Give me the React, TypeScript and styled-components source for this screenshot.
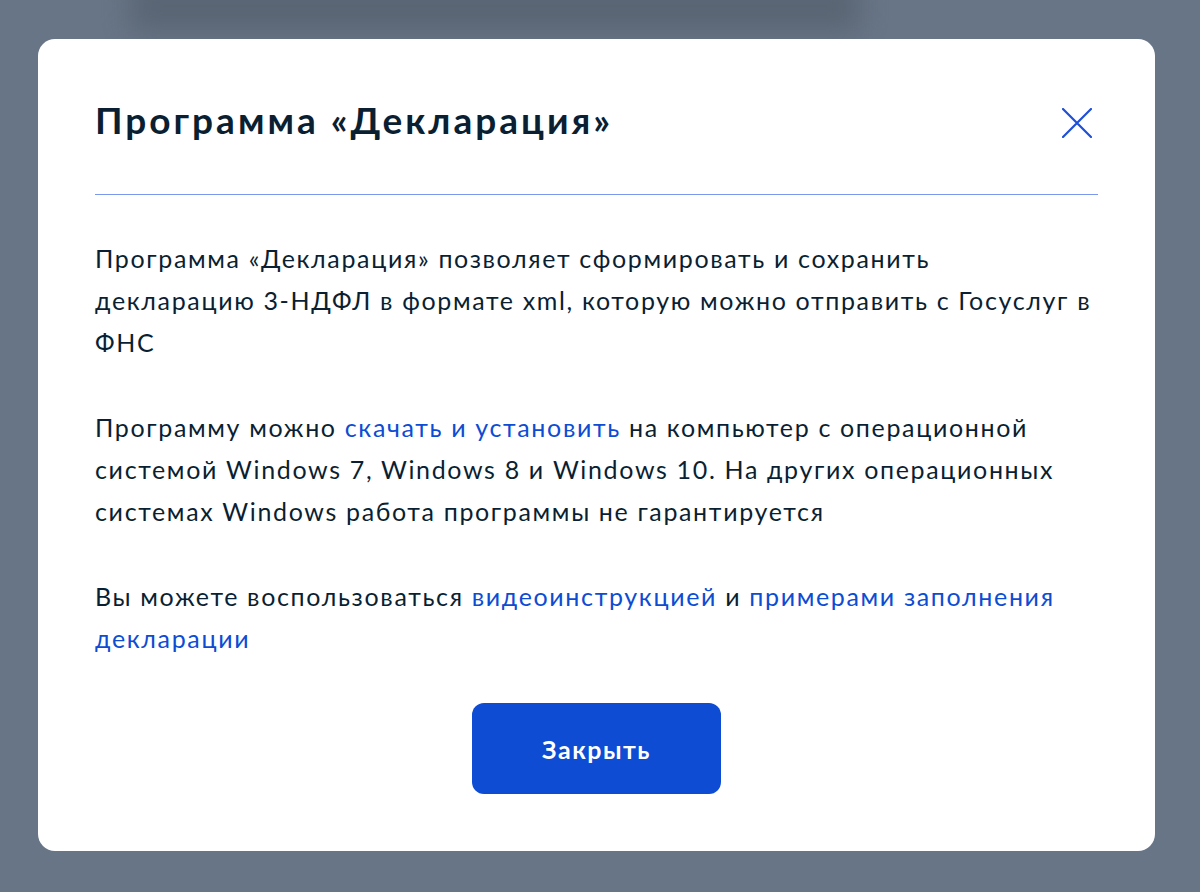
import styled, { createGlobalStyle } from 'styled-components';

const GlobalStyle = createGlobalStyle`
  html, body {
    margin: 0;
    padding: 0;
  }

  body {
    font-family: Lato, 'Noto Sans', sans-serif;
    color: #0b1f33;
  }
`;

const Backdrop = styled.div`
  position: relative;
  width: 1200px;
  height: 892px;
  overflow: hidden;
  background: #687586;
  padding: 39px 0 0 38px;
  box-sizing: border-box;
`;

const BlurredHeader = styled.div`
  position: absolute;
  top: -20px;
  left: 130px;
  width: 730px;
  height: 52px;
  background: #56616f;
  filter: blur(14px);
  opacity: 0.8;
`;

const Modal = styled.div`
  position: relative;
  width: 1117px;
  height: 812px;
  box-sizing: border-box;
  padding: 59px 57px 57px 57px;
  background: #ffffff;
  border-radius: 17px;
  display: flex;
  flex-direction: column;
`;

const Header = styled.div`
  display: flex;
  justify-content: space-between;
  align-items: flex-start;
  padding-bottom: 52px;
  border-bottom: 1.5px solid #7b98ee;
`;

const Title = styled.h1`
  margin: 0;
  font-size: 37px;
  line-height: 44px;
  font-weight: 700;
  letter-spacing: 3px;
  color: #0b1f33;
`;

const CloseButton = styled.button`
  margin: 10px 6px 0 0;
  padding: 0;
  width: 30px;
  height: 30px;
  border: none;
  background: none;
  cursor: pointer;
  display: flex;
`;

const Body = styled.div`
  padding-top: 42px;
  margin-right: -8px;
  display: flex;
  flex-direction: column;
  gap: 43px;
`;

const Paragraph = styled.p`
  margin: 0;
  font-size: 25px;
  line-height: 42px;
  letter-spacing: 1.65px;
  color: #0b1f33;
`;

const NoWrap = styled.span`
  white-space: nowrap;
`;

const Link = styled.a`
  color: #0d4cd3;
  text-decoration: none;
`;

const Footer = styled.div`
  display: flex;
  justify-content: center;
  margin-top: auto;
`;

const PrimaryButton = styled.button`
  width: 249px;
  height: 91px;
  border: none;
  border-radius: 12px;
  background: #0d4cd3;
  color: #ffffff;
  font-family: Lato, 'Noto Sans', sans-serif;
  font-size: 25px;
  font-weight: 700;
  letter-spacing: 1.5px;
  cursor: pointer;
`;

function CloseIcon() {
  return (
    <svg width="30" height="30" viewBox="0 0 30 30" fill="none">
      <path
        d="M1 1L29 29M29 1L1 29"
        stroke="#1d4fd8"
        strokeWidth="2.2"
        strokeLinecap="round"
      />
    </svg>
  );
}

export default function App() {
  return (
    <>
      <GlobalStyle />
      <Backdrop>
        <BlurredHeader />
        <Modal>
          <Header>
            <Title>Программа «Декларация»</Title>
            <CloseButton aria-label="Закрыть">
              <CloseIcon />
            </CloseButton>
          </Header>
          <Body>
            <Paragraph>
              Программа «Декларация» позволяет сформировать и сохранить
              <br />
              декларацию <NoWrap>3-НДФЛ</NoWrap> в формате xml, которую можно
              отправить с Госуслуг в ФНС
            </Paragraph>
            <Paragraph>
              Программу можно <Link href="#">скачать и установить</Link> на
              компьютер с операционной системой Windows 7, Windows 8 и Windows
              10. На других операционных системах Windows работа программы не
              гарантируется
            </Paragraph>
            <Paragraph>
              Вы можете воспользоваться <Link href="#">видеоинструкцией</Link> и{' '}
              <Link href="#">примерами заполнения декларации</Link>
            </Paragraph>
          </Body>
          <Footer>
            <PrimaryButton>Закрыть</PrimaryButton>
          </Footer>
        </Modal>
      </Backdrop>
    </>
  );
}
